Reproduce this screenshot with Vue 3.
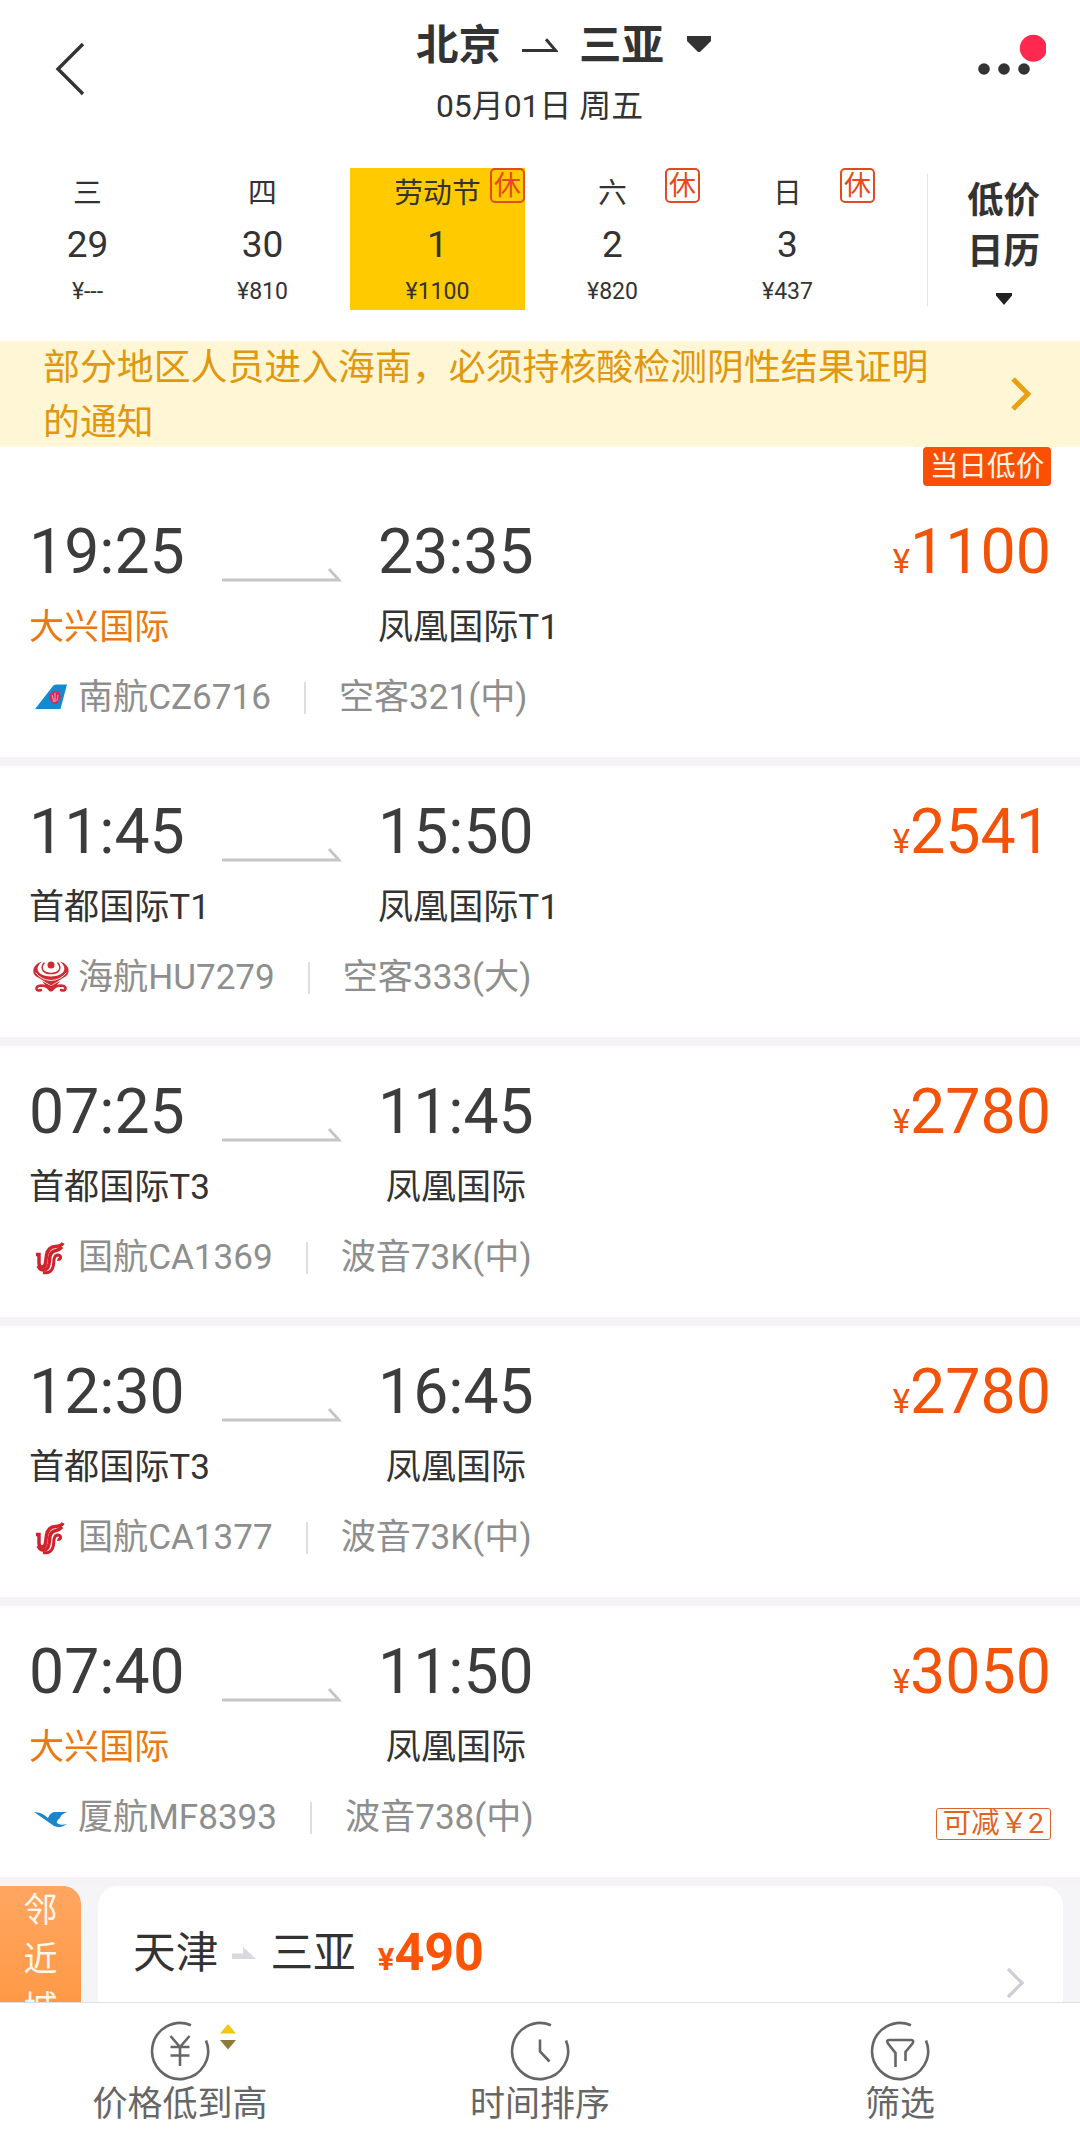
<script setup>
const days = [
  { week: '三', day: '29', price: '¥---' },
  { week: '四', day: '30', price: '¥810' },
  { week: '劳动节', day: '1', price: '¥1100', rest: true, active: true },
  { week: '六', day: '2', price: '¥820', rest: true },
  { week: '日', day: '3', price: '¥437', rest: true },
]

const flights = [
  {
    depart: '19:25',
    arrive: '23:35',
    from: '大兴国际',
    to: '凤凰国际T1',
    highlight: true,
    logo: 'cz',
    flightNo: '南航CZ6716',
    plane: '空客321(中)',
    price: 1100,
    lowest: true,
  },
  {
    depart: '11:45',
    arrive: '15:50',
    from: '首都国际T1',
    to: '凤凰国际T1',
    logo: 'hu',
    flightNo: '海航HU7279',
    plane: '空客333(大)',
    price: 2541,
  },
  {
    depart: '07:25',
    arrive: '11:45',
    from: '首都国际T3',
    to: '凤凰国际',
    logo: 'ca',
    flightNo: '国航CA1369',
    plane: '波音73K(中)',
    price: 2780,
  },
  {
    depart: '12:30',
    arrive: '16:45',
    from: '首都国际T3',
    to: '凤凰国际',
    logo: 'ca',
    flightNo: '国航CA1377',
    plane: '波音73K(中)',
    price: 2780,
  },
  {
    depart: '07:40',
    arrive: '11:50',
    from: '大兴国际',
    to: '凤凰国际',
    highlight: true,
    logo: 'mf',
    flightNo: '厦航MF8393',
    plane: '波音738(中)',
    price: 3050,
    discount: '可减￥2',
  },
]

const tabs = [
  { icon: 'price', label: '价格低到高' },
  { icon: 'time', label: '时间排序' },
  { icon: 'filter', label: '筛选' },
]
</script>

<template>
  <div class="page">
    <header class="header">
      <svg class="header__back" viewBox="0 0 32 56">
        <path d="M29 3L4 28l25 25" fill="none" stroke="#333" stroke-width="3.4" />
      </svg>
      <div class="header__center">
        <div class="header__title">
          <span>北京</span>
          <svg class="header__arrow" viewBox="0 0 36 16">
            <path d="M0 12.4h33.5L24 1.2" fill="none" stroke="#333" stroke-width="3" />
          </svg>
          <span>三亚</span>
          <svg class="header__caret" viewBox="0 0 24 16">
            <path d="M0 0h24v5L13.5 15.4q-1.5 1.2-3 0L0 5z" fill="#333" />
          </svg>
        </div>
        <div class="header__date">05月01日 周五</div>
      </div>
      <svg class="header__more" viewBox="0 0 70 46">
        <circle cx="8" cy="35" r="5.8" fill="#333" />
        <circle cx="28" cy="35" r="5.8" fill="#333" />
        <circle cx="48" cy="35" r="5.8" fill="#333" />
        <circle cx="57.3" cy="14.3" r="13.5" fill="#ff284f" />
      </svg>
    </header>

    <nav class="dates">
      <div v-for="item in days" :key="item.day" class="day" :class="{ 'day--active': item.active }">
        <span class="day__week">{{ item.week }}</span>
        <span class="day__num">{{ item.day }}</span>
        <span class="day__price">{{ item.price }}</span>
        <span v-if="item.rest" class="day__rest">休</span>
      </div>
      <div class="calendar">
        <span>低价</span>
        <span>日历</span>
        <svg class="calendar__caret" viewBox="0 0 16 12">
          <path d="M0 0h16v2.5L8 12 0 2.5z" fill="#222" />
        </svg>
      </div>
    </nav>

    <section class="notice">
      <p class="notice__text">部分地区人员进入海南，必须持核酸检测阴性结果证明的通知</p>
      <svg class="notice__arrow" viewBox="0 0 22 34">
        <path d="M3 2l15 15L3 32" fill="none" stroke="#e8a014" stroke-width="4.8" />
      </svg>
    </section>

    <main class="list">
      <article v-for="flight in flights" :key="flight.flightNo" class="flight">
        <div v-if="flight.lowest" class="flight__lowest"><span>当日低价</span></div>
        <div class="flight__body">
          <div class="flight__times">
            <div class="stop">
              <div class="stop__time">{{ flight.depart }}</div>
              <div class="stop__airport" :class="{ 'stop__airport--orange': flight.highlight }">
                {{ flight.from }}
              </div>
            </div>
            <svg class="flight__arrow" viewBox="0 0 120 14">
              <path d="M0 12h117L107 1" fill="none" stroke="#c5c5c5" stroke-width="2.8" />
            </svg>
            <div class="stop stop--arrive">
              <div class="stop__time">{{ flight.arrive }}</div>
              <div class="stop__airport">{{ flight.to }}</div>
            </div>
            <div class="flight__price"><small>¥</small>{{ flight.price }}</div>
          </div>
          <div class="flight__info">
            <svg v-if="flight.logo === 'cz'" class="logo" viewBox="0 0 40 40">
              <path d="M4 32L22 9q1-1.5 3-1.5h11L29.5 32z" fill="#138bd0" />
              <path d="M18 20q-1-4 3-4l2-3 2 2 3-1 1 4q2 3-1 5l-2 4h-4l-1-3q-3 0-3-4z" fill="#d52b5b" />
              <path d="M21 18l2 7M24 16v9M27 18l-1 6" stroke="#f3b5cb" stroke-width=".9" />
            </svg>
            <svg v-else-if="flight.logo === 'hu'" class="logo" viewBox="0 0 40 40">
              <g fill="#cf2b33">
                <circle cx="20" cy="8" r="3.5" />
                <path
                  d="M11 4.500C0 8 0 18 8 21l12 7.500L32 21C40 18 40 8 29 4.500 37 11 34 19 20 19.500 6 19 3 11 11 4.500z"
                />
                <path d="M11 24l9 5 9-5-5 6.500-4 4.500-4-4.500z" />
              </g>
              <g fill="none" stroke-linecap="round">
                <path d="M13 6c-5 7 1 10.500 7 10.500S32 13 27 6" stroke="#cf2b33" stroke-width="1.5" />
                <path d="M5 16q5 7 15 7.500 10-.5 15-7.500" stroke="#fff" stroke-width=".9" />
                <path
                  d="M19 33q-3-4.500-9-4.500-5 .5-4.500 3.500 1 2.500 4.500 1M21 33q3-4.500 9-4.500 5 .5 4.500 3.500-1 2.500-4.500 1"
                  stroke="#cf2b33"
                  stroke-width="2.6"
                />
              </g>
            </svg>
            <svg v-else-if="flight.logo === 'ca'" class="logo" viewBox="0 0 40 40">
              <g fill="none" stroke="#cf242c">
                <path
                  d="M5 17.500h3v8.500q0 4 3 4 3 0 3.500-4l1-8q1.500-8 9-8.500 6-.5 7.500-3.500"
                  stroke-width="3.5"
                />
                <path d="M7 29q2 4 5 4 5 0 6-6l1-8q1-4.500 6-5.500 4-1 6-3.500" stroke-width="3.500" />
                <path d="M12 35.500q9 1.500 10.500-7.500l.5-6q1-4 4-4 3 .5 2.500 3-1 2-3 1.500" stroke-width="3" />
              </g>
            </svg>
            <svg v-else class="logo" viewBox="0 0 40 40">
              <path d="M3 15q8 0 14 6 2-5 6-6h13q-6 2-7 6-4 3-3 5 3 3 10 1-6 5-13 2Q13 22 3 15z" fill="#1b87c9" />
            </svg>
            <span>{{ flight.flightNo }}</span>
            <i class="flight__sep"></i>
            <span>{{ flight.plane }}</span>
            <span v-if="flight.discount" class="flight__discount">{{ flight.discount }}</span>
          </div>
        </div>
      </article>
    </main>

    <section class="nearby">
      <div class="nearby__tab"><span>邻</span><span>近</span><span>城</span></div>
      <div class="nearby__card">
        <span>天津</span>
        <svg class="nearby__to" viewBox="0 0 24 12">
          <path d="M0 6.500h11V0l13 12H0z" fill="#d9d9df" />
        </svg>
        <span>三亚</span>
        <b class="nearby__price"><small>¥</small>490</b>
        <svg class="nearby__more" viewBox="0 0 20 34">
          <path d="M2 3l14 14L2 31" fill="none" stroke="#cfced6" stroke-width="3.2" />
        </svg>
      </div>
    </section>

    <footer class="tabbar">
      <div v-for="tab in tabs" :key="tab.icon" class="tab">
        <svg class="tab__icon" viewBox="0 0 60 60" fill="none" stroke="#666" stroke-width="2.6">
          <path d="M41 4.300A28 28 0 1 0 56 19.500" />
          <path
            v-if="tab.icon === 'price'"
            d="M20.500 15L30 26l9.500-11M30 26v19M20.500 26h19M20.500 34.500h19"
          />
          <path v-else-if="tab.icon === 'time'" d="M30 18.500v12l9.500 10" />
          <path
            v-else
            d="M25.500 46V32L18 22.500q-2-3.500 1-3.500h22q3.500 0 1.500 3.500L35.500 31v9"
          />
        </svg>
        <svg v-if="tab.icon === 'price'" class="tab__sort" viewBox="0 0 16 26">
          <path d="M8 0l8 9.500H0z" fill="#f2c713" />
          <path d="M0 16h16l-8 9.500z" fill="#8d7a38" />
        </svg>
        <span class="tab__label">{{ tab.label }}</span>
      </div>
    </footer>
  </div>
</template>

<style>
body {
  background: #fff;
}
</style>

<style scoped>
.page {
  display: flex;
  flex-direction: column;
  width: 1080px;
  height: 2145px;
  overflow: hidden;
  background: #fff;
  color: #333;
  font-family: Roboto, 'Noto Sans CJK SC', sans-serif;
}

svg {
  display: block;
  flex: none;
}

.header {
  display: grid;
  grid-template-columns: 160px 1fr 160px;
  height: 168px;
  box-sizing: border-box;
  padding-top: 19px;
}

.header__back {
  width: 32px;
  height: 56px;
  margin: 22px 0 0 54px;
}

.header__center {
  display: flex;
  flex-direction: column;
  align-items: center;
}

.header__title {
  display: flex;
  align-items: center;
  font-size: 42.5px;
  font-weight: 700;
  line-height: 54px;
}

.header__arrow {
  width: 36px;
  height: 16px;
  margin: 0 21px;
}

.header__caret {
  width: 24px;
  height: 16px;
  margin: 0 -47px 4px 23px;
}

.header__date {
  margin: 13px 0 0 -1px;
  font-size: 31.9px;
  line-height: 40px;
}

.header__more {
  width: 70px;
  height: 46px;
  margin: 15px 0 0 56px;
}

.dates {
  display: flex;
  height: 173px;
}

.day {
  position: relative;
  display: flex;
  flex-direction: column;
  align-items: center;
  width: 175px;
  height: 142px;
}

.day--active {
  background: #ffca00;
}

.day__week {
  margin-top: 10px;
  font-size: 28.8px;
  line-height: 30px;
}

.day__num {
  margin-top: 17px;
  font-size: 37px;
  line-height: 40px;
}

.day__price {
  margin-top: 14px;
  font-size: 23px;
  line-height: 26px;
}

.day__rest {
  position: absolute;
  top: 0;
  right: 0;
  width: 35px;
  height: 35px;
  box-sizing: border-box;
  border: 2px solid #df4c20;
  border-radius: 5px;
  color: #e8481b;
  font-size: 27px;
  line-height: 32px;
  text-align: center;
}

.calendar {
  display: flex;
  flex-direction: column;
  align-items: center;
  flex: 1;
  height: 132px;
  margin: 6px 0 0 52px;
  padding: 1px 1px 0 0;
  box-sizing: border-box;
  border-left: 1px solid #e6e6e6;
  font-size: 36.5px;
  font-weight: 700;
  line-height: 51px;
}

.calendar__caret {
  width: 16px;
  height: 12px;
  margin-top: 16px;
}

.notice {
  display: flex;
  align-items: center;
  height: 106px;
  padding-left: 43px;
  background: #fff6d6;
  color: #e0980f;
}

.notice__text {
  width: 900px;
  margin: 3px 0 0;
  font-size: 36.9px;
  line-height: 54.6px;
}

.notice__arrow {
  width: 22px;
  height: 34px;
  margin: 0 0 1px 67px;
}

.flight {
  border-bottom: 9px solid #f6f3f6;
}

.flight__lowest {
  display: flex;
  justify-content: flex-end;
  padding-right: 29px;
}

.flight__lowest span {
  width: 128px;
  border-radius: 4px;
  background: #fb5004;
  color: #fff3e6;
  font-size: 28.7px;
  line-height: 39px;
  text-align: center;
}

.flight__body {
  height: 271px;
  box-sizing: border-box;
  padding: 34px 29px 0;
}

.flight__times {
  display: flex;
}

.stop {
  width: 193px;
  white-space: nowrap;
}

.stop--arrive {
  width: 156px;
  margin-left: 36px;
}

.stop--arrive .stop__airport {
  text-align: center;
}

.stop__time {
  color: #3c3c3c;
  font-size: 62.5px;
  line-height: 64px;
}

.stop__airport {
  margin-top: 21px;
  font-size: 35.1px;
  line-height: 44px;
}

.stop__airport--orange {
  color: #ea780f;
}

.flight__arrow {
  width: 120px;
  height: 14px;
  margin-top: 48px;
}

.flight__price {
  margin-left: auto;
  color: #f35309;
  font-size: 62.7px;
  line-height: 64px;
}

.flight__price small {
  font-size: 33px;
}

.flight__info {
  display: flex;
  align-items: center;
  margin-top: 26px;
  color: #8e8e8e;
  font-size: 35.1px;
  line-height: 44px;
}

.logo {
  width: 40px;
  height: 40px;
  margin: 0 7px 0 2px;
}

.flight__sep {
  width: 2px;
  height: 32px;
  margin: 2px 33px 0 33px;
  background: #dedede;
}

.flight__discount {
  height: 32px;
  margin: 11px 0 -3px auto;
  padding: 0 6px;
  box-sizing: border-box;
  border: 1.5px solid #d9652a;
  border-radius: 3px;
  color: #e2631f;
  font-size: 28.4px;
  line-height: 30px;
}

.nearby {
  display: flex;
  height: 116px;
  overflow: hidden;
  background: #f5f5f7;
}

.nearby__tab {
  display: flex;
  flex-direction: column;
  align-items: center;
  width: 81px;
  height: 180px;
  border-radius: 0 18px 0 0;
  background: linear-gradient(#ffa661, #ff9238);
  color: #fff8ea;
  font-size: 34px;
  line-height: 49px;
}

.nearby__card {
  display: flex;
  align-items: flex-start;
  width: 965px;
  height: 180px;
  margin-left: 17px;
  padding: 37px 37px 0 35px;
  box-sizing: border-box;
  border-radius: 20px 20px 0 0;
  background: #fff;
  font-size: 42.7px;
  line-height: 60px;
}

.nearby__to {
  width: 24px;
  height: 12px;
  margin: 24px 14px 0 14px;
}

.nearby__price {
  margin-left: 22px;
  color: #fb5406;
  font-size: 52px;
  line-height: 60px;
}

.nearby__price small {
  font-size: 31px;
}

.nearby__more {
  width: 20px;
  height: 34px;
  margin: 43px 0 0 auto;
}

.tabbar {
  display: flex;
  height: 143px;
  box-sizing: border-box;
  border-top: 1px solid #dfdfdf;
  background: #fff;
}

.tab {
  position: relative;
  display: flex;
  flex-direction: column;
  align-items: center;
  width: 360px;
  color: #666;
}

.tab__icon {
  width: 60px;
  height: 60px;
  margin-top: 18px;
}

.tab__sort {
  position: absolute;
  top: 21px;
  left: 220px;
  width: 16px;
  height: 26px;
}

.tab__label {
  margin-top: 2px;
  font-size: 35px;
  line-height: 44px;
}
</style>
